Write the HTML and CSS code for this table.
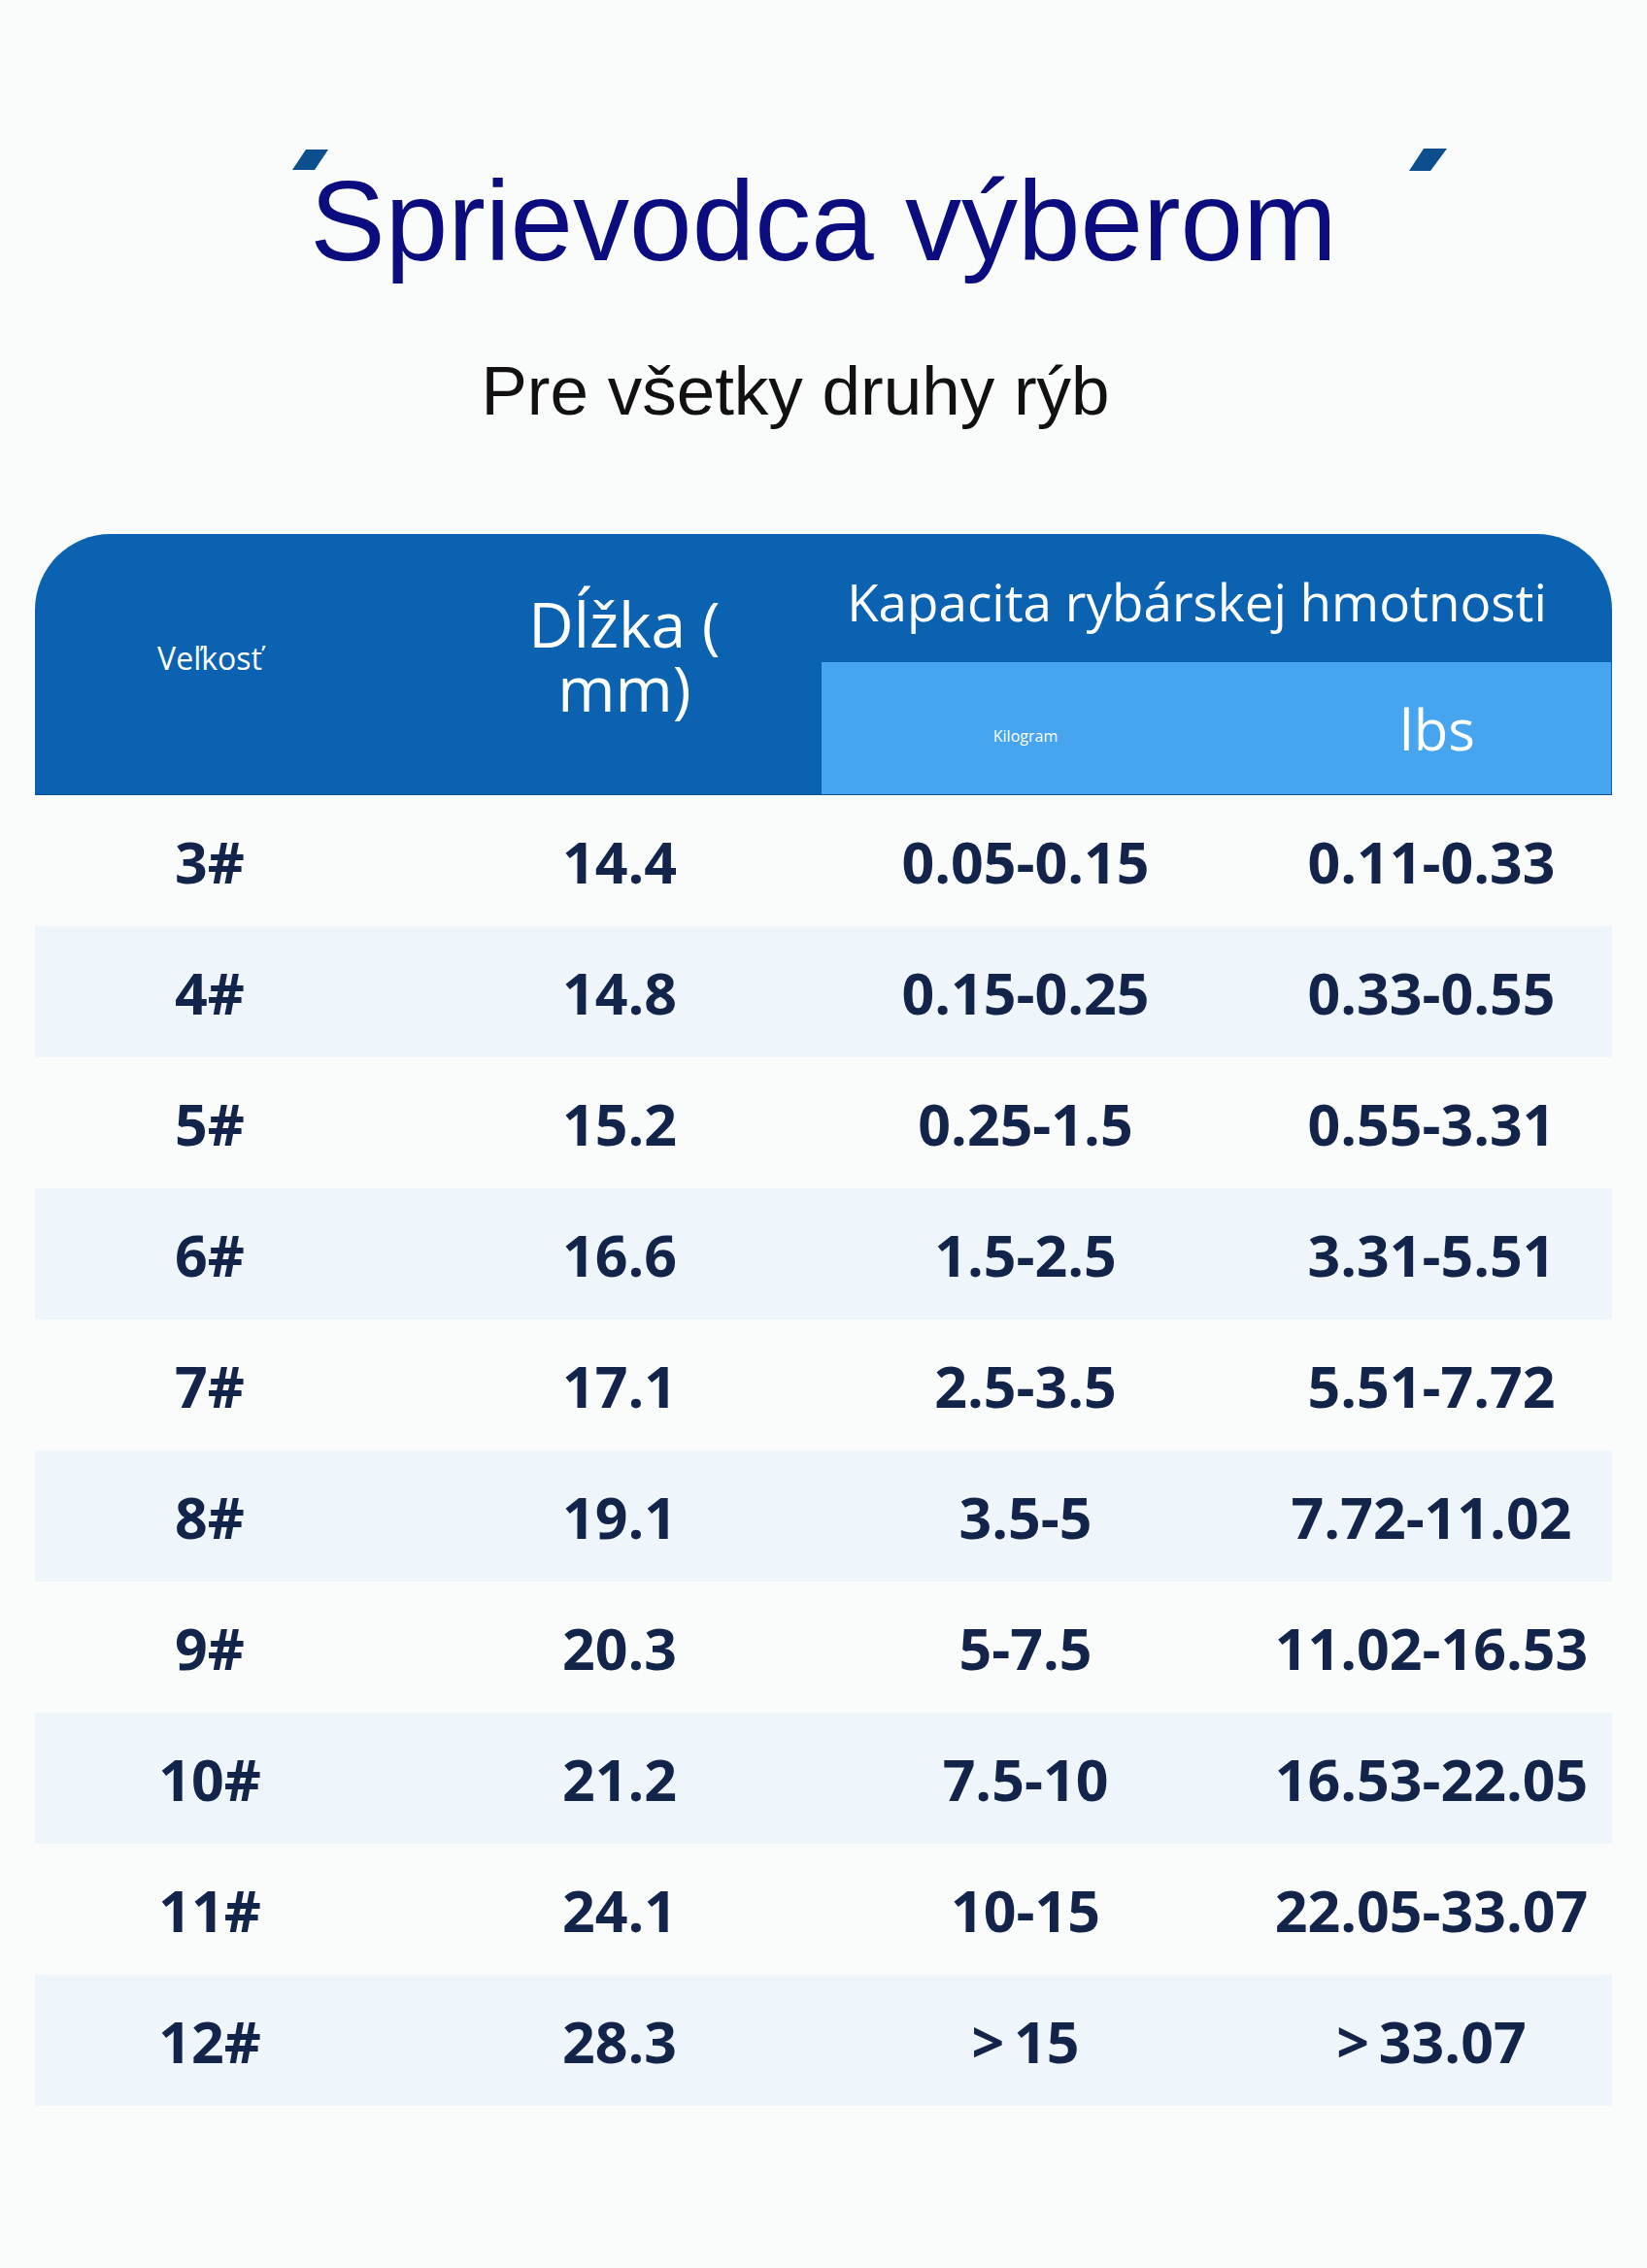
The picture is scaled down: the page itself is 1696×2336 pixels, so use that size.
FILE: index.html
```html
<!DOCTYPE html>
<html lang="sk">
<head>
<meta charset="utf-8">
<title>Sprievodca výberom</title>
<link rel="stylesheet" href="styles.css">
</head>
<body>
<main class="page">
  <header class="hero">
    <div class="title-wrap">
      <svg class="mark mark-left" width="38" height="22" viewBox="0 0 38 22"><polygon points="14,0 37,0 23,21 0,21" fill="#0d4f8c"/></svg>
      <h1 class="title">Sprievodca výberom</h1>
      <svg class="mark mark-right" width="40" height="24" viewBox="0 0 40 24"><polygon points="15,0 39,0 22,23 0,23" fill="#0d4f8c"/></svg>
    </div>
    <p class="subtitle">Pre všetky druhy rýb</p>
  </header>

  <section class="table">
    <div class="thead">
      <div class="th th-size">Veľkosť</div>
      <div class="th th-len"><span class="len-line">Dĺžka (</span><span class="len-line">mm)</span></div>
      <div class="th th-cap">Kapacita rybárskej hmotnosti</div>
      <div class="th th-kg">Kilogram</div>
      <div class="th th-lbs">lbs</div>
    </div>
    <div class="row"><span class="c1">3#</span><span class="c2">14.4</span><span class="c3">0.05-0.15</span><span class="c4">0.11-0.33</span></div>
    <div class="row alt"><span class="c1">4#</span><span class="c2">14.8</span><span class="c3">0.15-0.25</span><span class="c4">0.33-0.55</span></div>
    <div class="row"><span class="c1">5#</span><span class="c2">15.2</span><span class="c3">0.25-1.5</span><span class="c4">0.55-3.31</span></div>
    <div class="row alt"><span class="c1">6#</span><span class="c2">16.6</span><span class="c3">1.5-2.5</span><span class="c4">3.31-5.51</span></div>
    <div class="row"><span class="c1">7#</span><span class="c2">17.1</span><span class="c3">2.5-3.5</span><span class="c4">5.51-7.72</span></div>
    <div class="row alt"><span class="c1">8#</span><span class="c2">19.1</span><span class="c3">3.5-5</span><span class="c4">7.72-11.02</span></div>
    <div class="row"><span class="c1">9#</span><span class="c2">20.3</span><span class="c3">5-7.5</span><span class="c4">11.02-16.53</span></div>
    <div class="row alt"><span class="c1">10#</span><span class="c2">21.2</span><span class="c3">7.5-10</span><span class="c4">16.53-22.05</span></div>
    <div class="row"><span class="c1">11#</span><span class="c2">24.1</span><span class="c3">10-15</span><span class="c4">22.05-33.07</span></div>
    <div class="row alt"><span class="c1">12#</span><span class="c2">28.3</span><span class="c3">&gt;&thinsp;15</span><span class="c4">&gt;&thinsp;33.07</span></div>
  </section>
</main>
</body>
</html>
```

FILE: styles.css
```css
html, body {
  margin: 0;
  padding: 0;
}

body {
  background: #fafbfb;
  width: 1696px;
  min-height: 2336px;
}

.page {
  padding-top: 170px;
}

.title-wrap {
  position: relative;
  text-align: center;
}

.title {
  margin: 0;
  font-family: "Liberation Sans", Arial, sans-serif;
  font-weight: 400;
  font-size: 116px;
  line-height: 1;
  color: #0b0c7e;
}

.mark {
  position: absolute;
  display: block;
}

.mark-left {
  left: 301px;
  top: -16px;
}

.mark-right {
  left: 1451px;
  top: -17px;
}

.subtitle {
  margin: 81px 0 0;
  padding-right: 58px;
  text-align: center;
  font-family: "Liberation Sans", Arial, sans-serif;
  font-size: 71px;
  line-height: 1;
  color: #111111;
}

.table {
  margin: 112px 36px 0;
  font-family: "Open Sans", "Noto Sans", sans-serif;
}

.thead {
  display: grid;
  grid-template-columns: 360px 450px 420px 393px;
  grid-template-rows: 132px 136px;
  background: #0a62b0;
  border-radius: 78px 78px 0 0;
  border-bottom: 1px solid #0a4f8f;
  color: #ffffff;
  overflow: hidden;
}

.th {
  display: flex;
  align-items: center;
  justify-content: center;
  text-align: center;
}

.th-size {
  grid-column: 1;
  grid-row: 1 / 3;
  font-size: 32px;
  padding-bottom: 14px;
}

.th-len {
  grid-column: 2;
  grid-row: 1 / 3;
  flex-direction: column;
  font-size: 64px;
  padding-left: 44px;
  padding-bottom: 16px;
}

.len-line {
  display: block;
  line-height: 66px;
  height: 66px;
}

.th-cap {
  grid-column: 3 / 5;
  grid-row: 1;
  font-size: 53px;
  padding-right: 40px;
  padding-top: 6px;
}

.th-kg {
  grid-column: 3;
  grid-row: 2;
  background: #46a5ee;
  font-size: 16px;
  padding-top: 16px;
}

.th-lbs {
  grid-column: 4;
  grid-row: 2;
  background: #46a5ee;
  font-size: 58px;
  padding-left: 35px;
}

.row {
  display: grid;
  grid-template-columns: 360px 450px 420px 393px;
  height: 135px;
  align-items: center;
  text-align: center;
  font-size: 59px;
  font-weight: 700;
  color: #13244a;
}

.row.alt {
  background: #eef6fb;
}

.c2 {
  padding-left: 34px;
}

.c4 {
  padding-left: 23px;
}
```
